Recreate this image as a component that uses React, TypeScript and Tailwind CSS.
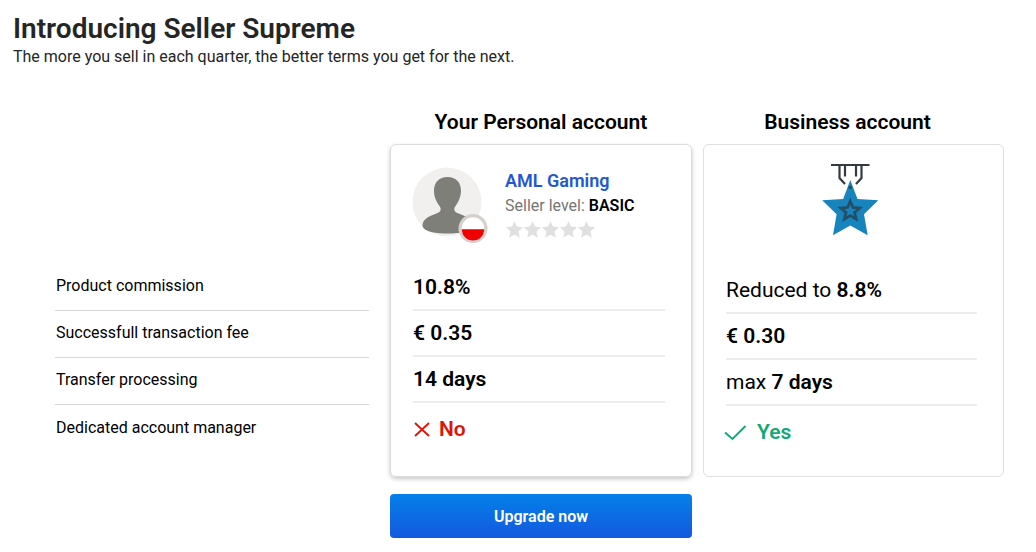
import type { ReactNode } from "react";

const features = [
  "Product commission",
  "Successfull transaction fee",
  "Transfer processing",
  "Dedicated account manager",
];

function Avatar() {
  return (
    <svg viewBox="1 0 76 76" className="size-[76px] overflow-visible" aria-hidden="true">
      <circle cx="35" cy="35" r="34.500" fill="#f1f0ee" />
      <path
        d="M35.500 10c-8.500 0-14 5.500-13.500 15 .3 6 3 10.500 5.500 14 2 3 1.500 5.500-2 7-6 2.500-14.500 5-15 12-.3 6 11 8.500 25 8.500s25.500-2.500 25-8.500c-.5-7-9-9.500-15-12-3.500-1.500-4-4-2-7 2.500-3.500 5-8 5.500-14 .5-9.500-5-15-13.500-15z"
        fill="#7f7f79"
      />
      {/* Country flag */}
      <circle cx="61" cy="61.500" r="14.500" fill="#d3d0cd" />
      <circle cx="61" cy="61.500" r="11.200" fill="#fff" />
      <path d="M49.800 62.300a11.200 11.200 0 0 0 22.400 0z" fill="#f00000" />
    </svg>
  );
}

function Star() {
  return (
    <svg viewBox="0 0 18 18" className="size-[18px]" aria-hidden="true">
      <path
        d="M9.500.2l2.500 5.400 6 .6-4.500 4.200 1.300 6.300-5.300-3.200-5.300 3.200 1.300-6.300L1 6.200l6-.6z"
        fill="#e0e0e0"
      />
    </svg>
  );
}

function Medal() {
  return (
    <svg viewBox="0 0 58 74" className="h-[74px] w-[58px]" aria-hidden="true">
      <g fill="none" stroke="#343b40" strokeWidth="2.200">
        <path d="M10 2h38.500" />
        <path d="M18.500 2v13l5.500 6M40.500 2v13L35 21M24 2v11.500M35 2v11.500" />
      </g>
      <path
        d="M29.300 17l7.200 19 20.800 1.300-14.300 14L46.700 72.300 29.300 62.500 12 72.300l3.600-21L1.200 37.300 22.200 36z"
        fill="#1784bd"
      />
      <circle cx="29.300" cy="24.500" r="1.800" fill="#234f69" />
      <path
        d="M29.300 38.200l2.600 6.200 6.900.6-5.200 4.500 1.600 6.600-5.900-3.500-5.900 3.500 1.600-6.600-5.200-4.500 6.900-.6z"
        fill="none"
        stroke="#234f69"
        strokeWidth="2.800"
      />
    </svg>
  );
}

function CrossIcon() {
  return (
    <svg viewBox="0 0 17 16" className="h-4 w-[17px]" fill="none" aria-hidden="true">
      <path d="M2 1l14 13M16 1L2 14" stroke="#dd1408" strokeWidth="1.900" />
    </svg>
  );
}

function CheckIcon() {
  return (
    <svg
      viewBox="0 0 22 16"
      className="h-4 w-[22px] overflow-visible"
      fill="none"
      aria-hidden="true"
    >
      <path d="M-1 7.500L6.500 14 19.500 1" stroke="#14a876" strokeWidth="2" />
    </svg>
  );
}

function Values({ items }: { items: ReactNode[] }) {
  return (
    <ul className="divide-y-2 divide-[#ededed] text-[21px]">
      {items.map((item, i) => (
        <li
          key={i}
          className="flex h-[46px] items-center pt-[2px] whitespace-pre last:h-[52px]"
        >
          {item}
        </li>
      ))}
    </ul>
  );
}

export default function App() {
  return (
    <main className="bg-white py-[13px] font-['Roboto',sans-serif] text-black">
      <header className="px-[13px] text-[#252525]">
        <h1 className="text-[28px] leading-8 font-semibold">
          Introducing Seller Supreme
        </h1>
        <p className="text-base leading-6">
          The more you sell in each quarter, the better terms you get for the
          next.
        </p>
      </header>

      <div className="mt-[39px] grid grid-cols-[324fr_302fr_301fr] gap-x-[11px] pr-8 pl-[55px]">
        {/* Feature names */}
        <ul className="mt-[156px] mr-[10px] divide-y divide-[#d6d6d6]">
          {features.map((f) => (
            <li key={f} className="flex h-[47px] items-center pb-[2px] pl-px text-base">
              {f}
            </li>
          ))}
        </ul>

        {/* Personal account */}
        <section>
          <h2 className="pb-2 text-center text-[21px] leading-7 font-semibold">
            Your Personal account
          </h2>
          <div className="h-[333px] rounded-md border border-[#dcdcdc] px-[22px] pt-[22px] shadow-[0_2px_4px_rgba(0,0,0,0.22)]">
            <div className="flex h-[98px] gap-4">
              <Avatar />
              <div>
                <a
                  href="#"
                  className="block text-lg leading-7 font-semibold text-[#2457cf]"
                >
                  AML Gaming
                </a>
                <p className="text-base leading-[22px] text-[#757575]">
                  Seller level:{" "}
                  <strong className="font-semibold text-black">BASIC</strong>
                </p>
                <div className="mt-1 flex" role="img" aria-label="0 out of 5 stars">
                  {[1, 2, 3, 4, 5].map((n) => (
                    <Star key={n} />
                  ))}
                </div>
              </div>
            </div>
            <div className="mr-1 font-semibold">
              <Values
                items={[
                  "10.8%",
                  "€ 0.35",
                  "14 days",
                  <span className="flex items-center gap-[9px] text-[#dd1408]">
                    <CrossIcon />
                    No
                  </span>,
                ]}
              />
            </div>
          </div>
          <button
            type="button"
            className="mt-[17px] h-11 w-full rounded bg-linear-to-b from-[#0580e8] to-[#1458df] pt-[2px] text-base font-semibold text-white"
          >
            Upgrade now
          </button>
        </section>

        {/* Business account */}
        <section>
          <h2 className="pr-3 pb-2 text-center text-[21px] leading-7 font-semibold">
            Business account
          </h2>
          <div className="h-[333px] rounded-md border border-[#dfdfdf] px-[22px] pt-[18px]">
            <div className="flex h-[105px] justify-center pr-2">
              <Medal />
            </div>
            <div className="mr-1">
              <Values
                items={[
                  <span>
                    Reduced to <b className="font-semibold">8.8%</b>
                  </span>,
                  <b className="font-semibold">€ 0.30</b>,
                  <span>
                    max <b className="font-semibold">7 days</b>
                  </span>,
                  <span className="flex items-center gap-[9px] font-semibold text-[#14a876]">
                    <CheckIcon />
                    Yes
                  </span>,
                ]}
              />
            </div>
          </div>
        </section>
      </div>
    </main>
  );
}
